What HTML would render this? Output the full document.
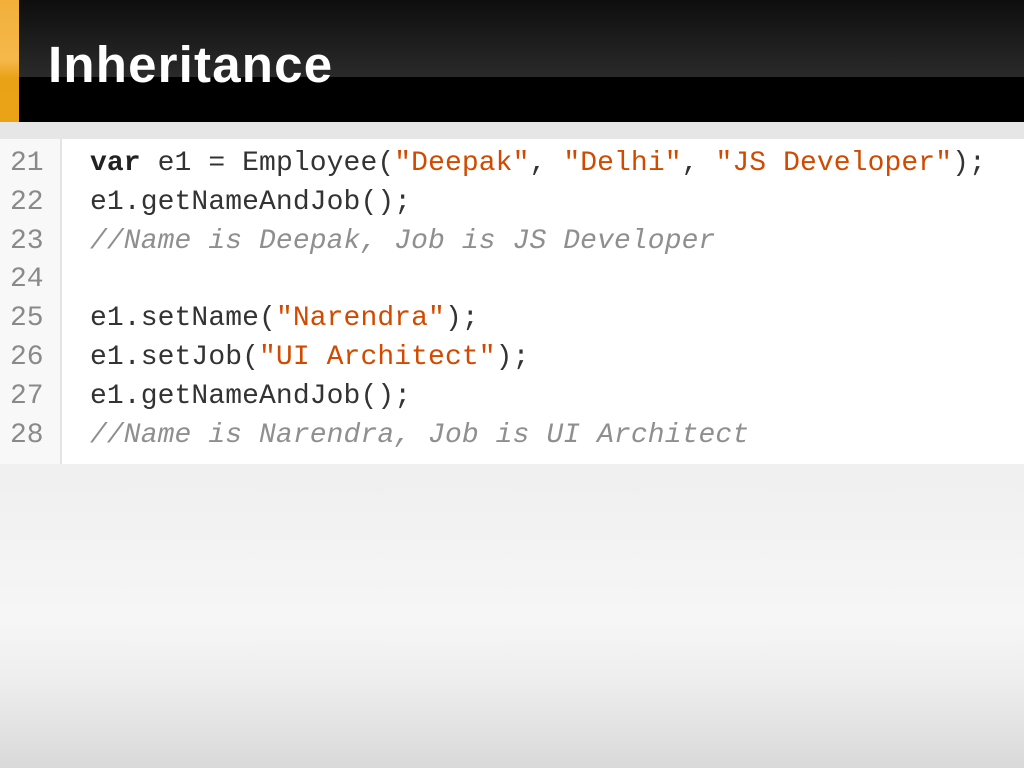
<!DOCTYPE html>
<html><head><style>
body{margin:0;width:1024px;height:768px;overflow:hidden;position:relative;font-family:"Liberation Sans",sans-serif;background:linear-gradient(#e9e9e9 0px,#f0f0f0 480px,#f6f6f6 620px,#eeeeee 680px,#d9d9d9 768px);}
.hdr{position:absolute;left:0;top:0;width:1024px;height:122px;background:#000;}
.hdr .top{position:absolute;left:0;top:0;width:1024px;height:77px;background:linear-gradient(#0e0e0e,#2a2a2a);}
.bar{position:absolute;left:0;top:0;width:19px;height:122px;background:linear-gradient(#f2b03a 0,#f5b84a 60px,#e9a215 78px,#eaa216 122px);}
.hdr h1{position:absolute;left:48px;top:35px;margin:0;color:#fff;font-size:51px;font-weight:bold;line-height:60px;letter-spacing:1.2px;}
.strip{position:absolute;left:0;top:122px;width:1024px;height:17px;background:#e6e6e6;}
.code{position:absolute;left:0;top:139px;width:1024px;height:325px;background:#fff;}
.gut{position:absolute;left:0;top:0;width:60px;height:325px;background:#f8f8f8;border-right:2px solid #e4e4e4;}
pre{margin:0;position:absolute;top:6px;font-family:"Liberation Mono",monospace;font-size:28px;line-height:38.8px;}
.ln{left:10px;color:#8a8a8a;}
.src{left:90px;color:#333;letter-spacing:0.1px;}
.k{font-weight:bold;color:#222;}
.s{color:#d14a00;}
.c{color:#8f8f8f;font-style:italic;}
</style></head><body>
<div class="hdr"><div class="top"></div><div class="bar"></div><h1>Inheritance</h1></div>
<div class="strip"></div>
<div class="code"><div class="gut"></div>
<pre class="ln">21
22
23
24
25
26
27
28</pre>
<pre class="src"><span class="k">var</span> e1 = Employee(<span class="s">"Deepak"</span>, <span class="s">"Delhi"</span>, <span class="s">"JS Developer"</span>);
e1.getNameAndJob();
<span class="c">//Name is Deepak, Job is JS Developer</span>

e1.setName(<span class="s">"Narendra"</span>);
e1.setJob(<span class="s">"UI Architect"</span>);
e1.getNameAndJob();
<span class="c">//Name is Narendra, Job is UI Architect</span></pre>
</div>
</body></html>
